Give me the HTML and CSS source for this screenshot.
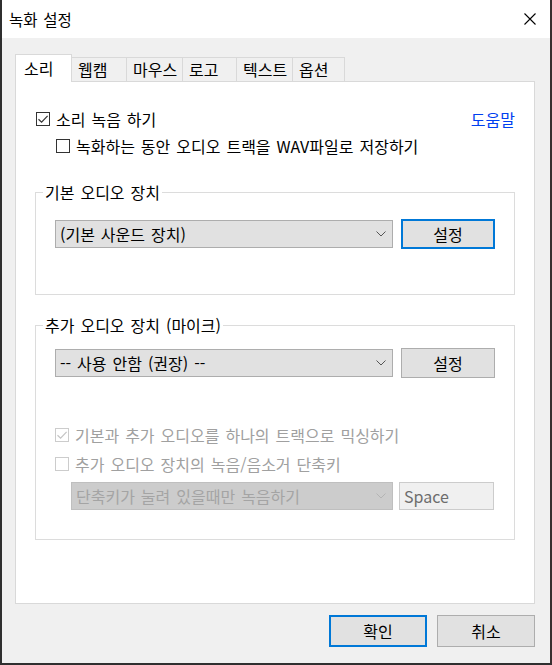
FILE: index.html
```html
<!DOCTYPE html>
<html lang="ko">

<head>
  <meta charset="UTF-8" />
  <title>녹화 설정</title>
  <link rel="stylesheet" href="styles.css">
</head>

<body>
  <div class="window">
    <div class="titlebar">
      <span class="title">녹화 설정</span>
      <svg class="close" width="12" height="12" viewBox="0 0 12 12">
        <path d="M0.5 0.5 L11.5 11.5 M11.5 0.5 L0.5 11.5" stroke="#000" stroke-width="1.1" fill="none" />
      </svg>
    </div>

    <div class="client">
      <div class="tabs">
        <div class="tab active">소리</div>
        <div class="tab two">웹캠</div>
        <div class="tab three">마우스</div>
        <div class="tab two">로고</div>
        <div class="tab three">텍스트</div>
        <div class="tab two last">옵션</div>
      </div>

      <div class="panel">
        <div class="row first-row">
          <label class="check">
            <span class="box on">
              <svg width="12" height="12" viewBox="0 0 12 12"><path d="M1.5 6.2 L4.6 9.2 L10.6 2.8" stroke="#333" stroke-width="1.2" fill="none" /></svg>
            </span>
            소리 녹음 하기
          </label>
          <a class="help" href="#">도움말</a>
        </div>
        <div class="row sub-row">
          <label class="check"><span class="box"></span>녹화하는 동안 오디오 트랙을 WAV파일로 저장하기</label>
        </div>

        <fieldset class="group group-main">
          <legend>기본 오디오 장치</legend>
          <div class="group-body main-body">
            <div class="device-row">
              <div class="select">
                <span>(기본 사운드 장치)</span>
                <svg class="chev" width="10" height="6" viewBox="0 0 10 6"><path d="M0.5 0.5 L5 5 L9.5 0.5" stroke="#555" fill="none" /></svg>
              </div>
              <button class="btn default">설정</button>
            </div>
          </div>
        </fieldset>

        <fieldset class="group group-mic">
          <legend>추가 오디오 장치 (마이크)</legend>
          <div class="group-body mic-body">
            <div class="device-row">
              <div class="select">
                <span>-- 사용 안함 (권장) --</span>
                <svg class="chev" width="10" height="6" viewBox="0 0 10 6"><path d="M0.5 0.5 L5 5 L9.5 0.5" stroke="#555" fill="none" /></svg>
              </div>
              <button class="btn">설정</button>
            </div>
            <div class="row mix-row">
              <label class="check disabled">
                <span class="box on">
                  <svg width="12" height="12" viewBox="0 0 12 12"><path d="M1.5 6.2 L4.6 9.2 L10.6 2.8" stroke="#c4c4c4" stroke-width="1.2" fill="none" /></svg>
                </span>
                기본과 추가 오디오를 하나의 트랙으로 믹싱하기
              </label>
            </div>
            <div class="row hotkey-row">
              <label class="check disabled"><span class="box"></span>추가 오디오 장치의 녹음/음소거 단축키</label>
            </div>
            <div class="row key-row">
              <div class="select off">
                <span>단축키가 눌려 있을때만 녹음하기</span>
                <svg class="chev" width="10" height="6" viewBox="0 0 10 6"><path d="M0.5 0.5 L5 5 L9.5 0.5" stroke="#b4b4b4" fill="none" /></svg>
              </div>
              <div class="keybox">Space</div>
            </div>
          </div>
        </fieldset>
      </div>

      <div class="footer">
        <button class="btn big default">확인</button>
        <button class="btn big">취소</button>
      </div>
    </div>
  </div>
</body>

</html>
```

FILE: styles.css
```css
* {
  box-sizing: border-box;
}

body {
  margin: 0;
  font-family: "Noto Sans CJK KR", "Noto Sans", sans-serif;
  font-size: 16px;
  word-spacing: 1.5px;
  color: #000;
}

.window {
  width: 552px;
  height: 665px;
  display: flex;
  flex-direction: column;
  border-left: 2px solid #2f2f2f;
  border-right: 2px solid #3a2f30;
  border-bottom: 2px solid #2f2f2f;
}

.titlebar {
  height: 38px;
  background: #fff;
  display: flex;
  align-items: center;
  justify-content: space-between;
  padding: 0 14px 0 7px;
}

.title {
  font-size: 15.5px;
  line-height: 20px;
}

.close {
  display: block;
}

.client {
  flex: 1;
  background: #f0f0f0;
  display: flex;
  flex-direction: column;
  padding: 16px 15px 0 13px;
}

/* tabs */
.tabs {
  display: flex;
  align-items: flex-end;
  height: 27px;
}

.tab {
  height: 24px;
  line-height: 22px;
  padding-left: 6px;
  border: 1px solid #d9d9d9;
  border-right: none;
  border-bottom: none;
  background: #f0f0f0;
  white-space: nowrap;
}

.tab.two {
  width: 54px;
}

.tab.three {
  width: 56px;
}

.tab.last {
  width: 53px;
  border-right: 1px solid #d9d9d9;
}

.tab.active {
  width: 57px;
  height: 28px;
  line-height: 26px;
  margin-bottom: -1px;
  padding-left: 8px;
  background: #fff;
  border-right: 1px solid #d9d9d9;
  position: relative;
  z-index: 1;
}

.tab.active + .tab {
  border-left: none;
}

/* panel */
.panel {
  height: 523px;
  background: #fff;
  border: 1px solid #d9d9d9;
  padding: 27px 19px 0 19px;
}

.row {
  display: flex;
  align-items: center;
  height: 20px;
}

.first-row {
  justify-content: space-between;
  padding-left: 1px;
}

.sub-row {
  margin-top: 7px;
  padding-left: 21px;
}

.check {
  display: flex;
  align-items: center;
  gap: 6px;
  line-height: 20px;
  white-space: nowrap;
}

.box {
  width: 14px;
  height: 14px;
  border: 1px solid #333;
  background: #fff;
  display: flex;
  align-items: center;
  justify-content: center;
}

.check.disabled {
  color: #a0a0a0;
}

.check.disabled .box {
  border-color: #cccccc;
}

.help {
  color: #0040f0;
  text-decoration: none;
  line-height: 20px;
}

/* groups */
.group {
  margin: 0;
  padding: 0;
  border: 1px solid #dcdcdc;
  min-width: 0;
}

.group legend {
  margin-left: 7px;
  padding: 0 2px;
  line-height: 20px;
}

.group-main {
  margin-top: 26px;
}

.group-mic {
  margin-top: 20px;
}

.group-body {
  padding: 0 19px;
}

.main-body {
  padding-top: 17px;
  padding-bottom: 45px;
}

.mic-body {
  padding-top: 13px;
  padding-bottom: 29px;
}

.device-row {
  display: flex;
  align-items: center;
  gap: 8px;
  height: 30px;
}

.select {
  width: 338px;
  height: 28px;
  background: #e1e1e1;
  border: 1px solid #adadad;
  display: flex;
  align-items: center;
  justify-content: space-between;
  padding: 0 6px 0 4px;
  white-space: nowrap;
}

.select.off {
  width: 322px;
  background: #cccccc;
  border-color: #bfbfbf;
  color: #a4a4a4;
}

.chev {
  display: block;
}

.btn {
  width: 94px;
  height: 30px;
  background: #e1e1e1;
  border: 1px solid #adadad;
  font-family: inherit;
  font-size: 16px;
  color: #000;
  padding: 0;
}

.btn.default {
  border: 2px solid #0078d7;
}

.mix-row {
  margin-top: 47px;
}

.hotkey-row {
  margin-top: 9px;
}

.key-row {
  margin-top: 8px;
  height: 28px;
  padding-left: 16px;
  gap: 6px;
}

.keybox {
  width: 95px;
  height: 28px;
  background: #f0f0f0;
  border: 1px solid #cccccc;
  color: #6d6d6d;
  padding-left: 4px;
  line-height: 26px;
}

/* footer */
.footer {
  display: flex;
  justify-content: flex-end;
  gap: 10px;
  padding-top: 11px;
}

.btn.big {
  width: 98px;
  height: 32px;
}
```
